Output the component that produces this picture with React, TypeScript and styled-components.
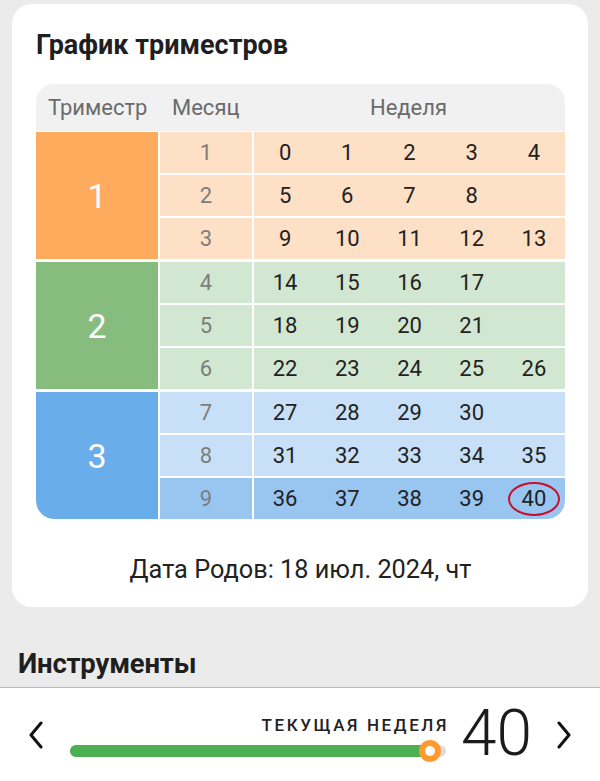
import React from "react";
import styled, { createGlobalStyle } from "styled-components";

const Global = createGlobalStyle`
  html, body { margin: 0; padding: 0; }
  body {
    background: #ebebeb;
    font-family: Roboto, "Noto Sans", sans-serif;
    width: 600px;
    height: 781px;
    overflow: hidden;
  }
`;

const Page = styled.div`
  display: flex;
  flex-direction: column;
  height: 781px;
`;

const Card = styled.section`
  margin: 4px 12px 0;
  background: #ffffff;
  border-radius: 20px;
  padding: 25px 23px 0 24px;
  height: 603px;
  box-sizing: border-box;
  display: flex;
  flex-direction: column;
`;

const Title = styled.h2`
  margin: 0;
  font-size: 27px;
  font-weight: 700;
  color: #1f1f1f;
  line-height: 32px;
  letter-spacing: 0;
`;

const Table = styled.div`
  margin-top: 23px;
  border-radius: 18px;
  overflow: hidden;
  display: flex;
  flex-direction: column;
  gap: 1px;
`;

const HeaderRow = styled.div`
  display: grid;
  grid-template-columns: 124px 94px 1fr;
  height: 47px;
  background: #f1f1f1;
  align-items: center;
  font-size: 22px;
  color: #6b6b6b;
`;

const HeadCell = styled.div<{ $center?: boolean }>`
  text-align: ${(p) => (p.$center ? "center" : "left")};
  padding-left: ${(p) => (p.$center ? "0" : "12px")};
  padding-right: ${(p) => (p.$center ? "2px" : "0")};
`;

const Groups = styled.div`
  display: flex;
  flex-direction: column;
  gap: 3px;
`;

const Group = styled.div`
  display: grid;
  grid-template-columns: 122px 92px 1fr;
  grid-auto-rows: 41px;
  gap: 2px;
`;

const TriCell = styled.div<{ $bg: string; $last?: boolean }>`
  grid-row: span 3;
  background: ${(p) => p.$bg};
  color: #ffffff;
  font-size: 34px;
  display: flex;
  align-items: center;
  justify-content: center;
  border-bottom-left-radius: ${(p) => (p.$last ? "18px" : "0")};
`;

const MonthCell = styled.div<{ $bg: string }>`
  background: ${(p) => p.$bg};
  color: #7d7d7d;
  font-size: 22px;
  display: flex;
  align-items: center;
  justify-content: center;
`;

const WeekCell = styled.div<{ $bg: string; $last?: boolean }>`
  background: ${(p) => p.$bg};
  display: grid;
  grid-template-columns: repeat(5, 1fr);
  align-items: center;
  font-size: 22px;
  color: #222222;
  border-bottom-right-radius: ${(p) => (p.$last ? "18px" : "0")};
`;

const Week = styled.span`
  position: relative;
  text-align: center;
`;

const Ring = styled.span`
  position: absolute;
  left: 50%;
  top: 50%;
  width: 52px;
  height: 34px;
  transform: translate(-50%, -50%);
  border: 2px solid #c8102e;
  border-radius: 50%;
  box-sizing: border-box;
`;

const DueDate = styled.p`
  margin: 0;
  flex: 1;
  display: flex;
  align-items: center;
  justify-content: center;
  font-size: 25.3px;
  color: #222222;
  padding-top: 13px;
`;

const SectionTitle = styled.h3`
  margin: 0;
  padding: 0 18px;
  height: 80px;
  display: flex;
  align-items: flex-end;
  padding-bottom: 7px;
  box-sizing: border-box;
  font-size: 27.5px;
  font-weight: 700;
  color: #1f1f1f;
  letter-spacing: -0.2px;
`;

const BottomBar = styled.footer`
  flex: 1;
  background: #ffffff;
  border-top: 1.5px solid #b9b9b9;
  display: flex;
  align-items: center;
  padding: 0 0 0 24px;
  box-sizing: border-box;
`;

const ChevronBtn = styled.button`
  border: 0;
  background: transparent;
  padding: 0;
  width: 24px;
  height: 32px;
  display: flex;
  align-items: center;
  justify-content: center;
  color: #111;
`;

const SliderBlock = styled.div`
  width: 376px;
  margin-left: 22px;
  margin-top: 2px;
  display: flex;
  flex-direction: column;
  align-items: flex-end;
  gap: 10px;
`;

const SliderLabel = styled.div`
  font-size: 17px;
  font-weight: 500;
  letter-spacing: 2.6px;
  color: #222;
  margin-right: -3px;
`;

const Track = styled.div`
  position: relative;
  width: 100%;
  height: 12px;
  border-radius: 6px;
  background: #dddddd;
`;

const TrackFill = styled.div`
  height: 100%;
  border-radius: 6px;
  background: #4caf50;
`;

const Knob = styled.div`
  position: absolute;
  top: 50%;
  width: 22px;
  height: 22px;
  border-radius: 50%;
  background: #ffffff;
  border: 6px solid #ff9a2e;
  box-sizing: border-box;
  transform: translate(-50%, -50%);
`;

const BigNumber = styled.div`
  font-size: 64px;
  font-weight: 300;
  color: #1b1b1b;
  margin-left: 15px;
  line-height: 1;
  width: 91px;
  margin-top: -2px;
`;

type GroupDef = {
  tri: string;
  triBg: string;
  monthBg: string;
  weekBg: string;
  rows: { month: number; weeks: (number | null)[]; bg?: string }[];
};

const groups: GroupDef[] = [
  {
    tri: "1",
    triBg: "#ffab5e",
    monthBg: "#fde0c6",
    weekBg: "#fde0c6",
    rows: [
      { month: 1, weeks: [0, 1, 2, 3, 4] },
      { month: 2, weeks: [5, 6, 7, 8, null] },
      { month: 3, weeks: [9, 10, 11, 12, 13] },
    ],
  },
  {
    tri: "2",
    triBg: "#86bd7e",
    monthBg: "#d2e7d2",
    weekBg: "#d2e7d2",
    rows: [
      { month: 4, weeks: [14, 15, 16, 17, null] },
      { month: 5, weeks: [18, 19, 20, 21, null] },
      { month: 6, weeks: [22, 23, 24, 25, 26] },
    ],
  },
  {
    tri: "3",
    triBg: "#69adea",
    monthBg: "#c8e0f7",
    weekBg: "#c8e0f7",
    rows: [
      { month: 7, weeks: [27, 28, 29, 30, null] },
      { month: 8, weeks: [31, 32, 33, 34, 35] },
      { month: 9, weeks: [36, 37, 38, 39, 40], bg: "#98c6f1" },
    ],
  },
];

const Chevron = ({ dir }: { dir: "left" | "right" }) => (
  <svg width="16" height="28" viewBox="0 0 16 28" fill="none">
    <polyline
      points={dir === "left" ? "13,2 3,14 13,26" : "3,2 13,14 3,26"}
      stroke="currentColor"
      strokeWidth="3"
      strokeLinecap="round"
      strokeLinejoin="round"
    />
  </svg>
);

export default function App() {
  const current = 40;
  const pct = (current / 40) * 100 - 4.2;
  return (
    <Page>
      <Global />
      <Card>
        <Title>График триместров</Title>
        <Table>
          <HeaderRow>
            <HeadCell>Триместр</HeadCell>
            <HeadCell>Месяц</HeadCell>
            <HeadCell $center>Неделя</HeadCell>
          </HeaderRow>
          <Groups>
            {groups.map((g, gi) => (
              <Group key={g.tri}>
                <TriCell $bg={g.triBg} $last={gi === groups.length - 1}>
                  {g.tri}
                </TriCell>
                {g.rows.map((r, ri) => {
                  const isLast = gi === groups.length - 1 && ri === g.rows.length - 1;
                  return (
                    <React.Fragment key={r.month}>
                      <MonthCell style={{ gridColumn: 2, gridRow: ri + 1 }} $bg={r.bg ?? g.monthBg}>
                        {r.month}
                      </MonthCell>
                      <WeekCell style={{ gridColumn: 3, gridRow: ri + 1 }} $bg={r.bg ?? g.weekBg} $last={isLast}>
                        {r.weeks.map((w, wi) => (
                          <Week key={wi}>
                            {w}
                            {w === current && <Ring />}
                          </Week>
                        ))}
                      </WeekCell>
                    </React.Fragment>
                  );
                })}
              </Group>
            ))}
          </Groups>
        </Table>
        <DueDate>Дата Родов: 18 июл. 2024, чт</DueDate>
      </Card>
      <SectionTitle>Инструменты</SectionTitle>
      <BottomBar>
        <ChevronBtn aria-label="prev">
          <Chevron dir="left" />
        </ChevronBtn>
        <SliderBlock>
          <SliderLabel>ТЕКУЩАЯ НЕДЕЛЯ</SliderLabel>
          <Track>
            <TrackFill style={{ width: `${pct}%` }} />
            <Knob style={{ left: `${pct}%` }} />
          </Track>
        </SliderBlock>
        <BigNumber>{current}</BigNumber>
        <ChevronBtn aria-label="next">
          <Chevron dir="right" />
        </ChevronBtn>
      </BottomBar>
    </Page>
  );
}
